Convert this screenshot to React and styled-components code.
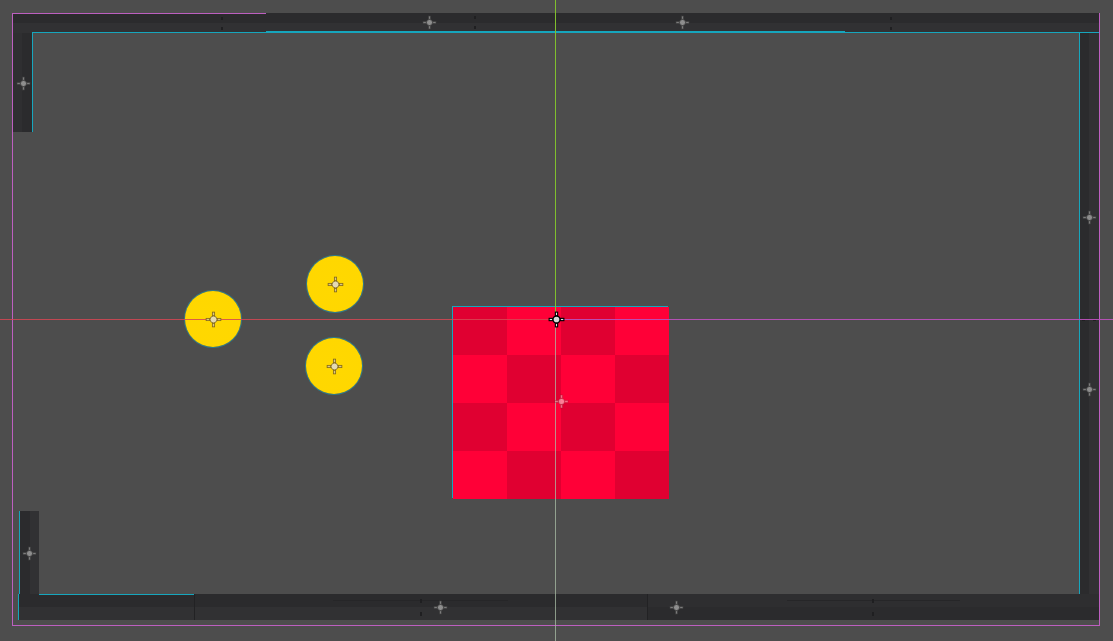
import React from "react";
import styled, { createGlobalStyle } from "styled-components";

const GlobalStyle = createGlobalStyle`
  html, body {
    margin: 0;
    padding: 0;
    background: #4d4d4d;
    overflow: hidden;
    font-family: "Liberation Sans", Arial, sans-serif;
  }
`;

const CYAN = "#16a6bd";
const DARK = "#2b2b2d";
const LIGHT = "#313133";

// walls are split in two tones along their length
const walls = [
  { x: 12, y: 13, w: 254, h: 20, dir: "h", tones: [DARK, LIGHT] },
  { x: 266, y: 13, w: 833, h: 20, dir: "h", tones: [DARK, LIGHT], over: true },
  { x: 12, y: 33, w: 20, h: 99, dir: "v", tones: ["#2f2f31", DARK] },
  { x: 1080, y: 33, w: 19, h: 561, dir: "v", tones: [DARK, LIGHT] },
  { x: 20, y: 511, w: 19, h: 83, dir: "v", tones: [DARK, LIGHT] },
  { x: 19, y: 594, w: 175, h: 26, dir: "h", tones: [DARK, LIGHT] },
  { x: 194, y: 594, w: 453, h: 26, dir: "h", tones: [DARK, LIGHT], sep: true },
  { x: 647, y: 594, w: 452, h: 26, dir: "h", tones: ["#2e2e30", DARK], sep: true },
];

const edges = [
  { x: 32, y: 32, w: 234, h: 1 },
  { x: 266, y: 31, w: 579, h: 2 },
  { x: 845, y: 32, w: 254, h: 1 },
  { x: 32, y: 33, w: 1, h: 99 },
  { x: 1079, y: 33, w: 1, h: 561 },
  { x: 19, y: 511, w: 1, h: 83 },
  { x: 18, y: 594, w: 1, h: 26 },
  { x: 39, y: 594, w: 155, h: 1 },
];

const ticks = [
  [221, 17, 2, 3], [221, 27, 2, 3],
  [474, 16, 2, 3], [474, 26, 2, 3],
  [890, 17, 2, 3], [890, 27, 2, 3],
  [420, 599, 2, 4], [420, 612, 2, 4],
  [872, 599, 2, 4], [872, 612, 2, 4],
  [1082, 320, 3, 1], [1093, 320, 3, 1],
];

const guides = [
  { x: 333, y: 600, w: 175 },
  { x: 787, y: 600, w: 173 },
];

const pins = [
  [23, 83], [429, 22], [682, 22], [1089, 217],
  [1089, 389], [29, 553], [440, 607], [676, 607],
];

const balls = [
  [213, 319], [335, 284], [334, 366],
];

const PIN_COLORS = {
  gray: { arm: "#7d7d7d", core: "#8e8e8e", line: "#3c3c3c" },
  gold: { arm: "#d8c684", core: "#e4dab4", line: "#80671a" },
  select: { arm: "#e6e6e6", core: "#d8d8d8", line: "#000000" },
  ghost: { arm: "rgba(255,190,200,0.55)", core: "rgba(255,210,215,0.6)", line: "rgba(150,20,40,0.5)" },
};

const Pin = ({ x, y, kind = "gray", size = 15 }) => {
  const c = PIN_COLORS[kind];
  const sw = kind === "select" ? 1 : 0.7;
  return (
    <PinBox $x={x} $y={y} $size={size}>
      <svg width={size} height={size} viewBox="0 0 15 15">
        <rect x="6.5" y="1" width="2" height="3.2" fill={c.arm} stroke={c.line} strokeWidth={sw} />
        <rect x="6.5" y="10.8" width="2" height="3.2" fill={c.arm} stroke={c.line} strokeWidth={sw} />
        <rect x="1" y="6.5" width="3.2" height="2" fill={c.arm} stroke={c.line} strokeWidth={sw} />
        <rect x="10.8" y="6.5" width="3.2" height="2" fill={c.arm} stroke={c.line} strokeWidth={sw} />
        <circle cx="7.5" cy="7.5" r="3" fill={c.core} stroke={c.line} strokeWidth={sw} />
      </svg>
    </PinBox>
  );
};

const cells = Array.from({ length: 16 }, (_, i) => {
  const row = Math.floor(i / 4);
  const col = i % 4;
  return (row + col) % 2 === 0;
});

export default function App() {
  return (
    <>
      <GlobalStyle />
      <Canvas>
        {walls.map((w, i) => (
          <Wall
            key={i}
            $x={w.x}
            $y={w.y}
            $w={w.w}
            $h={w.h}
            $dir={w.dir}
            $a={w.tones[0]}
            $b={w.tones[1]}
            $sep={w.sep}
            $over={w.over}
          />
        ))}

        <ViewportFrame />

        {edges.map((e, i) => (
          <Edge key={i} $x={e.x} $y={e.y} $w={e.w} $h={e.h} />
        ))}

        {guides.map((g, i) => (
          <Guide key={i} $x={g.x} $y={g.y} $w={g.w} />
        ))}

        {ticks.map(([x, y, w, h], i) => (
          <Tick key={i} $x={x} $y={y} $w={w} $h={h} />
        ))}

        {pins.map(([x, y], i) => (
          <Pin key={i} x={x} y={y} />
        ))}

        {balls.map(([x, y], i) => (
          <Ball key={i} $x={x} $y={y} />
        ))}

        <Block>
          {cells.map((dark, i) => (
            <Cell key={i} $dark={dark} />
          ))}
        </Block>

        <AxisX $side="left" />
        <AxisX $side="right" />
        <AxisY $side="top" />
        <AxisY $side="bottom" />

        {balls.map(([x, y], i) => (
          <Pin key={i} x={x} y={y} kind="gold" size={17} />
        ))}
        <Pin x={561} y={401} kind="ghost" />
        <Pin x={556} y={319} kind="select" size={17} />
      </Canvas>
    </>
  );
}

const Canvas = styled.div`
  position: relative;
  width: 1113px;
  height: 641px;
  background: #4d4d4d;
  overflow: hidden;
`;

const ViewportFrame = styled.div`
  position: absolute;
  left: 12px;
  top: 13px;
  width: 1086px;
  height: 611px;
  border: 1px solid #bd5fc0;
  z-index: 1;
`;

const Wall = styled.div`
  position: absolute;
  left: ${(p) => p.$x}px;
  top: ${(p) => p.$y}px;
  width: ${(p) => p.$w}px;
  height: ${(p) => p.$h}px;
  background: linear-gradient(
    ${(p) => (p.$dir === "h" ? "to bottom" : "to right")},
    ${(p) => p.$a} 50%,
    ${(p) => p.$b} 50%
  );
  border-left: ${(p) => (p.$sep ? "1px solid #222224" : "none")};
  box-sizing: border-box;
  z-index: ${(p) => (p.$over ? 2 : 0)};
`;

const Edge = styled.div`
  position: absolute;
  left: ${(p) => p.$x}px;
  top: ${(p) => p.$y}px;
  width: ${(p) => p.$w}px;
  height: ${(p) => p.$h}px;
  background: ${CYAN};
  z-index: 2;
`;

const Guide = styled.div`
  position: absolute;
  left: ${(p) => p.$x}px;
  top: ${(p) => p.$y}px;
  width: ${(p) => p.$w}px;
  height: 1px;
  background: #262628;
  z-index: 2;
`;

const Tick = styled.div`
  position: absolute;
  left: ${(p) => p.$x}px;
  top: ${(p) => p.$y}px;
  width: ${(p) => p.$w}px;
  height: ${(p) => p.$h}px;
  background: #1f1f21;
  z-index: 2;
`;

const PinBox = styled.div`
  position: absolute;
  left: ${(p) => p.$x - p.$size / 2}px;
  top: ${(p) => p.$y - p.$size / 2}px;
  width: ${(p) => p.$size}px;
  height: ${(p) => p.$size}px;
  line-height: 0;
  z-index: 5;

  svg {
    display: block;
  }
`;

const Ball = styled.div`
  position: absolute;
  left: ${(p) => p.$x - 28}px;
  top: ${(p) => p.$y - 28}px;
  width: 56px;
  height: 56px;
  border-radius: 50%;
  background: radial-gradient(
    circle,
    #ffd800 0%,
    #ffd700 80%,
    #e6c814 91%,
    #a0b050 100%
  );
  box-shadow: 0 0 0 1px rgba(22, 166, 189, 0.55);
`;

const Block = styled.div`
  position: absolute;
  left: 453px;
  top: 307px;
  width: 216px;
  height: 192px;
  display: grid;
  grid-template-columns: repeat(4, 54px);
  grid-template-rows: repeat(4, 48px);
  box-shadow: -1px -1px 0 0 ${CYAN};
`;

const Cell = styled.div`
  background: ${(p) => (p.$dark ? "#e00031" : "#ff0037")};
`;

const AxisX = styled.div`
  position: absolute;
  top: 319px;
  height: 1px;
  left: ${(p) => (p.$side === "left" ? "0" : "556px")};
  width: ${(p) => (p.$side === "left" ? "556px" : "557px")};
  background: ${(p) =>
    p.$side === "left" ? "rgba(214, 70, 84, 0.85)" : "rgba(184, 80, 184, 0.95)"};
  z-index: 3;
`;

const AxisY = styled.div`
  position: absolute;
  left: 555px;
  width: 1px;
  top: ${(p) => (p.$side === "top" ? "0" : "319px")};
  height: ${(p) => (p.$side === "top" ? "319px" : "322px")};
  background: ${(p) =>
    p.$side === "top" ? "#80bf2e" : "rgba(170, 190, 165, 0.75)"};
  z-index: 3;
`;
